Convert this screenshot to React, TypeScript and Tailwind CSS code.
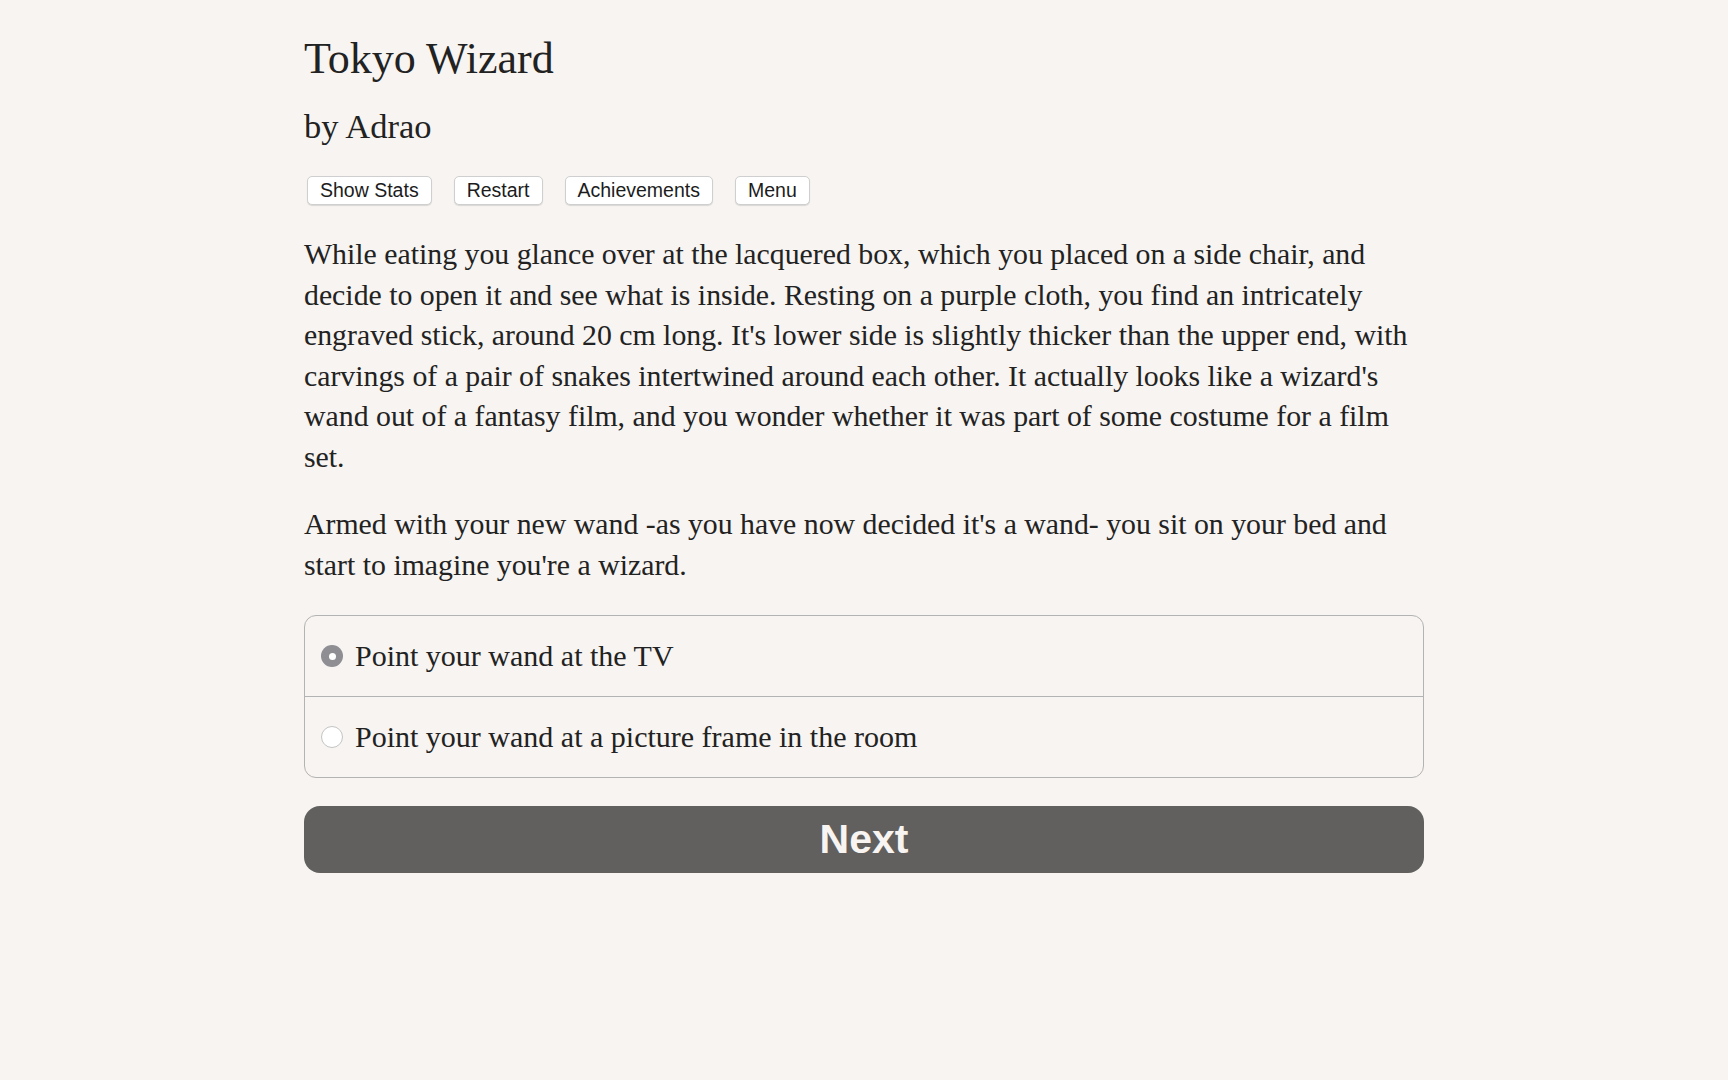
import { useState } from "react";

const serif = "font-['Liberation_Serif','Times_New_Roman',serif]";
const sans = "font-['Liberation_Sans',Arial,sans-serif]";

const toolbar = ["Show Stats", "Restart", "Achievements", "Menu"];

const choices = [
  "Point your wand at the TV",
  "Point your wand at a picture frame in the room",
];

export default function App() {
  const [picked, setPicked] = useState(0);

  return (
    <div className={`min-h-screen bg-[#f7f4f1] text-[#222222] ${serif}`}>
      <div className="mx-auto w-[1120px] pt-[35px] pb-20">
        <h1 className="text-[44px] leading-[48px]">Tokyo Wizard</h1>
        <h2 className="mt-[26px] text-[34.5px] leading-[35px]">by Adrao</h2>

        <div className="mt-[32px] ml-[3px] flex gap-[22px]">
          {toolbar.map((label) => (
            <button
              key={label}
              className={`h-[29px] rounded-[5px] border border-[#cfcfcf] bg-white px-3 text-[19.5px] leading-none text-[#1c1c1c] shadow-[0_1px_1px_rgba(0,0,0,0.12)] ${sans}`}
            >
              {label}
            </button>
          ))}
        </div>

        <div className="mt-[29px] text-[29.8px] leading-[40.5px]">
          <p>
            While eating you glance over at the lacquered box, which you placed on a side chair, and
            decide to open it and see what is inside. Resting on a purple cloth, you find an intricately
            engraved stick, around 20 cm long. It's lower side is slightly thicker than the upper end,
            with carvings of a pair of snakes intertwined around each other. It actually looks like a
            wizard's wand out of a fantasy film, and you wonder whether it was part of some costume for a
            film set.
          </p>
          <p className="mt-[27px]">
            Armed with your new wand -as you have now decided it's a wand- you sit on your bed and start
            to imagine you're a wizard.
          </p>
        </div>

        <div className="mt-[30px] overflow-hidden rounded-[12px] border-[1.5px] border-[#b3b3b3]">
          {choices.map((c, i) => (
            <label
              key={c}
              className={`flex cursor-pointer items-center gap-[12px] py-5 pl-[16px] text-[30px] leading-[40px] ${
                i > 0 ? "border-t-[1.5px] border-[#b3b3b3]" : ""
              }`}
              onClick={() => setPicked(i)}
            >
              {picked === i ? (
                <span className="flex h-[22px] w-[22px] shrink-0 items-center justify-center rounded-full bg-[#8e8e93]">
                  <span className="h-[7px] w-[7px] rounded-full bg-white" />
                </span>
              ) : (
                <span className="h-[22px] w-[22px] shrink-0 rounded-full border border-[#c4c4c4] bg-white" />
              )}
              <span>{c}</span>
            </label>
          ))}
        </div>

        <button
          className={`mt-[28px] h-[67px] w-full rounded-[16px] bg-[#61605e] text-[41px] font-bold text-[#f7f4f1] ${sans}`}
        >
          Next
        </button>
      </div>
    </div>
  );
}
